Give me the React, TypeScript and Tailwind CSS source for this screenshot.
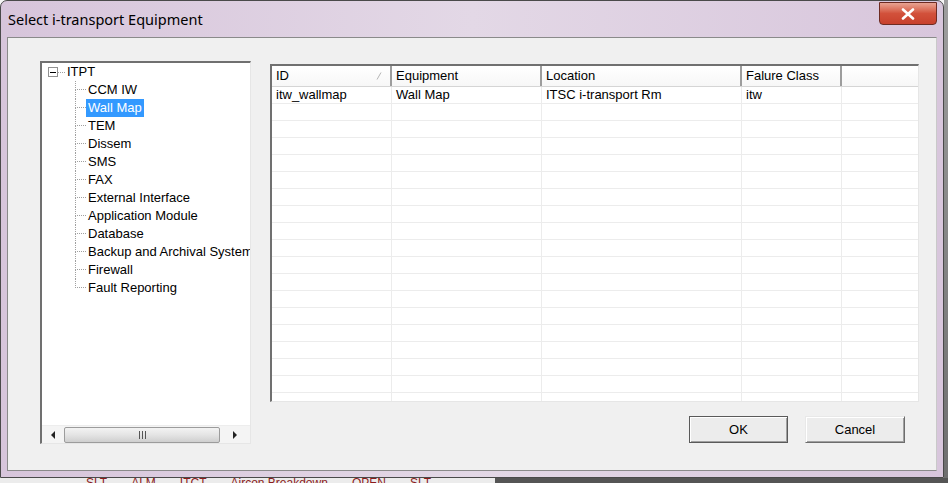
import React from 'react';

const children = [
  'CCM IW',
  'Wall Map',
  'TEM',
  'Dissem',
  'SMS',
  'FAX',
  'External Interface',
  'Application Module',
  'Database',
  'Backup and Archival System',
  'Firewall',
  'Fault Reporting',
];

const columns = [
  { label: 'ID', width: 'w-[120px]' },
  { label: 'Equipment', width: 'w-[150px]' },
  { label: 'Location', width: 'w-[200px]' },
  { label: 'Falure Class', width: 'w-[100px]' },
];

const rows = [['itw_wallmap', 'Wall Map', 'ITSC i-transport Rm', 'itw']];

function TreePanel() {
  return (
    <div className="w-[211px] h-[383px] flex flex-col bg-white border-t-2 border-l-2 border-t-[#707070] border-l-[#707070] border-r border-b border-r-[#e6e6e6] border-b-[#e6e6e6] overflow-hidden">
      <div className="flex-1 overflow-hidden whitespace-nowrap">
        {/* root node */}
        <div className="flex items-center h-[18px] pl-[6px]">
          <span className="w-[10px] h-[10px] border border-[#919191] flex items-center justify-center bg-white">
            <span className="w-[6px] h-px bg-black" />
          </span>
          <span className="w-[7px] border-t border-dotted border-[#a0a0a0]" />
          <span className="px-[2px] leading-[18px]">ITPT</span>
        </div>
        {children.map((name, i) => {
          const last = i === children.length - 1;
          const selected = name === 'Wall Map';
          return (
            <div key={name} className="flex h-[18px]">
              <span className="w-[33px] shrink-0" />
              <span className="w-[11px] shrink-0 flex flex-col">
                <span className="h-[9px] border-l border-b border-dotted border-[#a0a0a0]" />
                <span
                  className={`h-[9px] border-l border-dotted ${last ? 'border-transparent' : 'border-[#a0a0a0]'}`}
                />
              </span>
              <span
                className={`px-[2px] leading-[18px] ${selected ? 'bg-[#3399ff] text-white' : ''}`}
              >
                {name}
              </span>
            </div>
          );
        })}
      </div>

      {/* horizontal scrollbar */}
      <div className="h-[18px] flex items-center bg-[#f4f4f4] border-t border-[#ededed]">
        <div className="w-[22px] flex justify-center">
          <svg width="5" height="8" viewBox="0 0 5 8">
            <path d="M4 0 L0 4 L4 8 Z" fill="#222" />
          </svg>
        </div>
        <div className="w-[156px] h-[16px] rounded-[2px] border border-[#9c9c9c] bg-gradient-to-b from-[#f3f3f3] via-[#e4e4e4] to-[#cfcfcf] flex items-center justify-center">
          <svg width="7" height="8" viewBox="0 0 7 8">
            <path d="M0.5 0 V8 M3.5 0 V8 M6.5 0 V8" stroke="#555" strokeWidth="1" />
          </svg>
        </div>
        <div className="flex-1 flex justify-center">
          <svg width="5" height="8" viewBox="0 0 5 8">
            <path d="M0 0 L4 4 L0 8 Z" fill="#222" />
          </svg>
        </div>
      </div>
    </div>
  );
}

function EquipmentTable() {
  const blank = Array.from({ length: 19 - rows.length }, () => ['', '', '', '']);
  const all = [...rows, ...blank];
  return (
    <div className="w-[649px] h-[338px] flex flex-col bg-white border-t-2 border-l-2 border-t-[#707070] border-l-[#707070] border-r border-b border-r-[#e6e6e6] border-b-[#e6e6e6] overflow-hidden">
      <div className="flex h-[21px] shrink-0 border-b border-[#d5d5d5] bg-gradient-to-b from-white to-[#f7f7f7]">
        {columns.map((c, i) => (
          <div
            key={c.label}
            className={`${c.width} shrink-0 flex items-center justify-between pl-[4px] pr-[8px] border-r-2 border-r-[#9d9d9d]`}
          >
            <span>{c.label}</span>
            {i === 0 && (
              <svg width="6" height="8" viewBox="0 0 6 8">
                <path d="M1 7.5 L5 0.5" stroke="#b5b5b5" strokeWidth="1" />
              </svg>
            )}
          </div>
        ))}
        <div className="flex-1" />
      </div>
      <div className="flex-1 overflow-hidden">
        {all.map((r, ri) => (
          <div key={ri} className="flex h-[17px] border-b border-[#ececec]">
            {columns.map((c, ci) => (
              <div
                key={c.label}
                className={`${c.width} shrink-0 pl-[4px] leading-[16px] border-r border-[#ececec] whitespace-nowrap overflow-hidden`}
              >
                {r[ci]}
              </div>
            ))}
            <div className="flex-1" />
          </div>
        ))}
      </div>
    </div>
  );
}

export default function App() {
  return (
    <div className="w-[948px] h-[483px] overflow-hidden flex flex-col bg-[#f6f6f6] font-['Liberation_Sans',Arial,sans-serif] text-[13px] text-black">
      <div className="flex h-[478px] shrink-0">
        {/* dialog window */}
        <div className="w-[944px] h-[478px] flex flex-col rounded-t-[7px] border border-[#4a4a4a] bg-gradient-to-r from-[#d7c5db] via-[#e3d8e6] to-[#d8c6dc] px-[6px] pb-[6px]">
          <div className="h-[36px] shrink-0 flex items-start justify-between">
            <span className="pt-[8px] pl-[1px] font-['Noto_Sans',sans-serif] text-[14.5px] text-black">
              Select i-transport Equipment
            </span>
            <button className="mt-[1px] w-[58px] h-[23px] rounded-b-[4px] border border-[#6e2b22] bg-gradient-to-b from-[#e8a392] via-[#d2513b] to-[#c8402c] flex items-center justify-center">
              <svg width="14" height="12" viewBox="0 0 14 12">
                <path
                  d="M2 1.5 L12 10.5 M12 1.5 L2 10.5"
                  stroke="#fff"
                  strokeWidth="2.6"
                  strokeLinecap="round"
                />
              </svg>
            </button>
          </div>

          {/* client area */}
          <div className="flex-1 flex bg-[#f0f0f0] border border-t-[#8a8a8a] border-l-[#8a8a8a] border-r-[#c9c9c9] border-b-[#8a8a8a] pl-[32px] pt-[23px]">
            <TreePanel />
            <div className="ml-[19px] flex flex-col mt-[3px]">
              <EquipmentTable />
              <div className="mt-[14px] mr-[14px] flex justify-end gap-[17px]">
                <button className="w-[99px] h-[27px] border border-[#5a5a5a] bg-[#ececec] shadow-[inset_1px_1px_0_#ffffff,inset_-1px_-1px_0_#a0a0a0]">
                  OK
                </button>
                <button className="w-[100px] h-[27px] border border-t-[#e8e8e8] border-l-[#e8e8e8] border-r-[#6d6d6d] border-b-[#6d6d6d] bg-[#ececec] shadow-[inset_1px_1px_0_#ffffff,inset_-1px_-1px_0_#a0a0a0]">
                  Cancel
                </button>
              </div>
            </div>
          </div>
        </div>
        <div className="flex-1 bg-gradient-to-b from-[#9e9e9e] to-[#6f6f6f]" />
      </div>

      {/* application behind the dialog */}
      <div className="flex-1 flex overflow-hidden bg-[#ececec]">
        <div className="w-[495px] flex gap-[24px] pl-[86px] text-[12px] leading-[10px] text-[#8b1c1c] whitespace-nowrap">
          <span>SLT</span>
          <span>ALM</span>
          <span>ITCT</span>
          <span>Aircon Breakdown</span>
          <span>OPEN</span>
          <span>SLT</span>
        </div>
        <div className="flex-1 bg-[#555]" />
      </div>
    </div>
  );
}
